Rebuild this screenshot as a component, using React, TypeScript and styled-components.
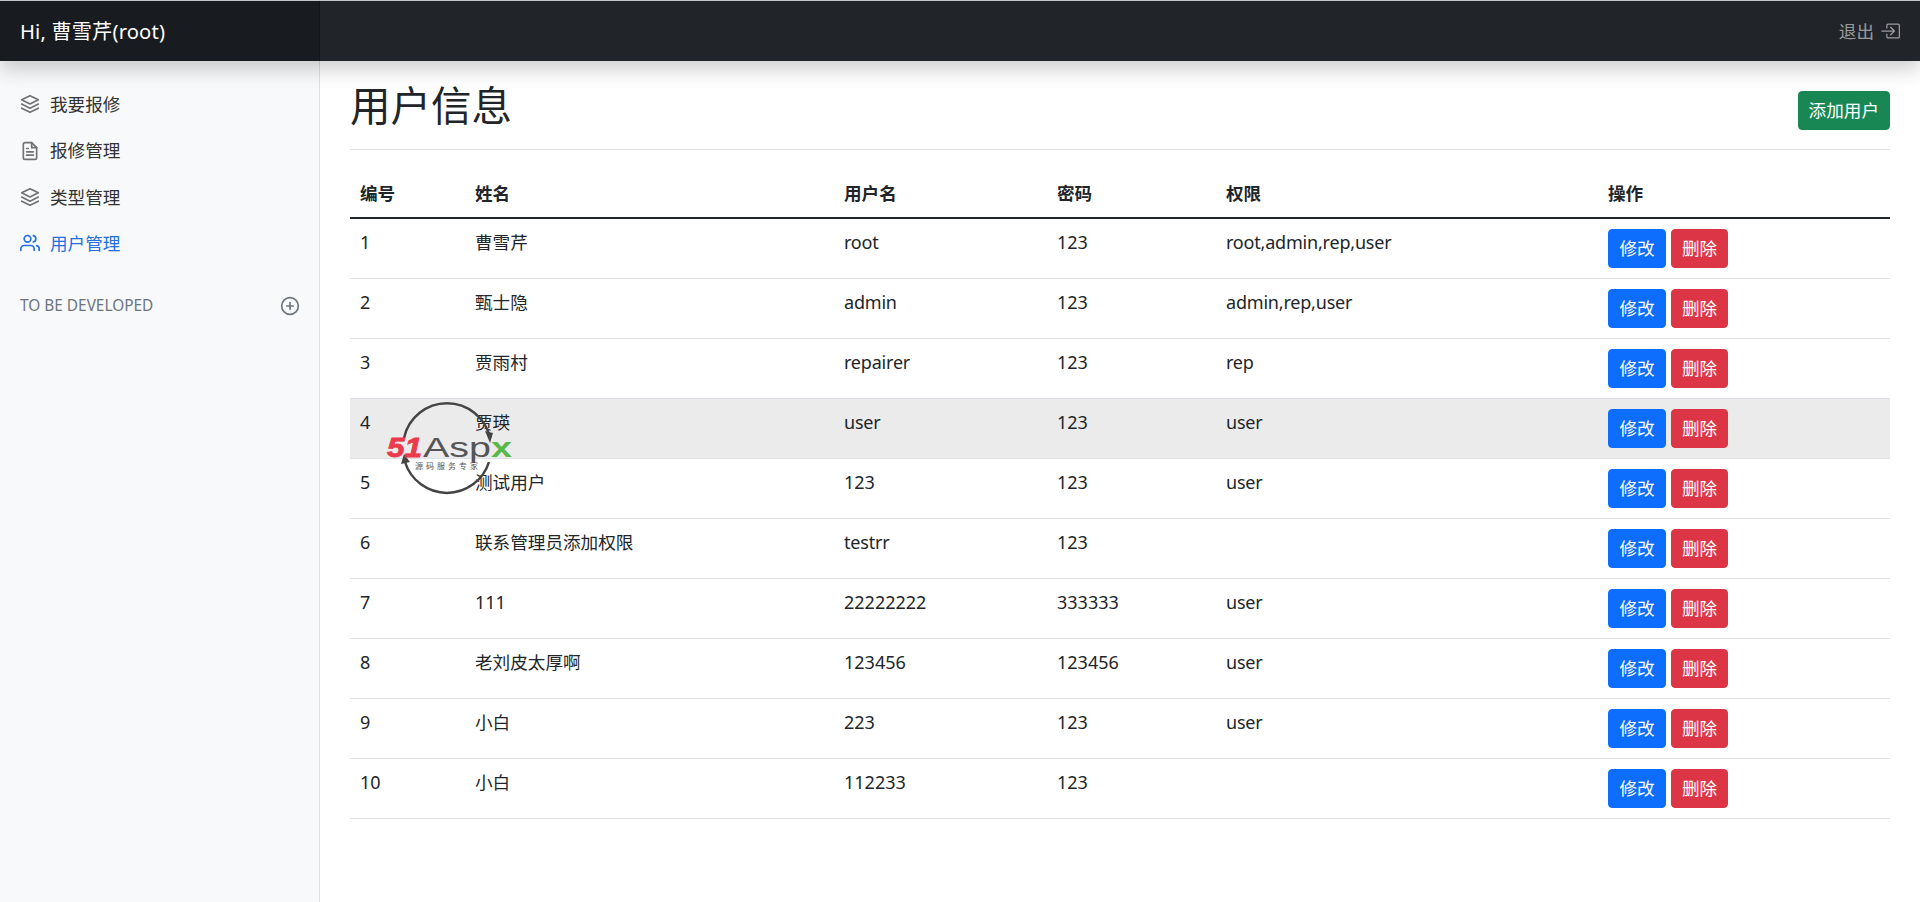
import React from "react";
import styled, { createGlobalStyle } from "styled-components";
import { FiLayers, FiFileText, FiUsers, FiPlusCircle } from "react-icons/fi";
import { BsBoxArrowInRight } from "react-icons/bs";

const Global = createGlobalStyle`
  html, body { margin: 0; padding: 0; background: #fff; }
  body {
    font-family: "Noto Sans", "Noto Sans CJK SC", sans-serif;
    font-size: 17.6px;
    line-height: 1.5;
    color: #212529;
    overflow: hidden;
  }
  * { box-sizing: border-box; }
`;

const Page = styled.div`
  position: relative;
  height: 902px;
  display: flex;
  flex-direction: column;
`;

const TopBar = styled.header`
  position: relative;
  z-index: 2;
  height: 61px;
  flex: none;
  display: flex;
  align-items: stretch;
  border-top: 1px solid #c4c5c6;
  background: #212529;
  box-shadow: 0 8px 20px rgba(0, 0, 0, 0.2);
`;

const Brand = styled.div`
  width: 320px;
  padding-left: 20px;
  display: flex;
  align-items: center;
  background: #181b1f;
  box-shadow: inset -1px 0 0 rgba(0, 0, 0, 0.25);
  color: #fff;
  font-size: 20.2px;
  letter-spacing: 0.15px;
`;

const SignOut = styled.a`
  margin-left: auto;
  padding-right: 20px;
  display: flex;
  align-items: center;
  gap: 6px;
  color: rgba(255, 255, 255, 0.55);
`;

const Body = styled.div`
  flex: 1;
  display: flex;
  min-height: 0;
`;

const Sidebar = styled.aside`
  width: 320px;
  flex: none;
  padding-top: 20px;
  background: #f8f9fa;
  box-shadow: inset -1px 0 0 rgba(0, 0, 0, 0.1);
`;

const NavList = styled.ul`
  list-style: none;
  margin: 0;
  padding: 0;
`;

const NavLink = styled.a<{ $active?: boolean }>`
  display: flex;
  align-items: center;
  gap: 10px;
  height: 46.4px;
  padding: 0 20px;
  color: ${(p) => (p.$active ? "#2470dc" : "#333")};
  svg {
    flex: none;
    color: ${(p) => (p.$active ? "#2470dc" : "#727272")};
  }
`;

const SectionHeading = styled.h6`
  margin: 27px 0 0;
  padding: 0 20px;
  height: 24px;
  display: flex;
  align-items: center;
  justify-content: space-between;
  color: #6c757d;
  font-size: 15.4px;
  font-weight: 400;
  text-transform: uppercase;
`;

const Main = styled.main`
  flex: 1;
  min-width: 0;
  padding: 0 30px;
`;

const TitleRow = styled.div`
  height: 89px;
  padding-top: 30px;
  display: flex;
  justify-content: space-between;
  align-items: flex-start;
  border-bottom: 1px solid #dee2e6;
`;

const Title = styled.h1`
  margin: -9px 0 0;
  font-size: 40.5px;
  font-weight: 400;
  line-height: 1.2;
  color: #212529;
`;

const Btn = styled.button<{ $bg: string; $w?: number }>`
  height: 39px;
  width: ${(p) => (p.$w ? `${p.$w}px` : "auto")};
  padding: ${(p) => (p.$w ? "0" : "0 10px")};
  border: 1px solid ${(p) => p.$bg};
  border-radius: 4px;
  background: ${(p) => p.$bg};
  color: #fff;
  font: inherit;
  line-height: 1;
  white-space: nowrap;
`;

const UserTable = styled.table`
  width: 100%;
  margin-top: 20px;
  border-collapse: collapse;
  table-layout: fixed;
`;

const Th = styled.th<{ $w: number }>`
  width: ${(p) => p.$w}px;
  height: 48px;
  padding: 10px;
  border-bottom: 2px solid #212529;
  font-weight: 700;
  text-align: left;
  vertical-align: top;
`;

const Row = styled.tr<{ $hover?: boolean }>`
  background: ${(p) => (p.$hover ? "#ebebeb" : "transparent")};
`;

const Td = styled.td<{ $latin?: boolean }>`
  height: 60px;
  padding: 10px;
  border-bottom: 1px solid #dee2e6;
  vertical-align: top;
  font-size: ${(p) => (p.$latin ? "18px" : "17.6px")};
  line-height: 27px;
  letter-spacing: ${(p) => (p.$latin ? "-0.2px" : "0")};
`;

const NumberSpan = styled.span`
  letter-spacing: 0;
  font-size: 18px;
`;

const Actions = styled.div`
  display: flex;
  gap: 5px;
`;

const Watermark = styled.svg`
  position: absolute;
  left: 385px;
  top: 400px;
  z-index: 1;
  pointer-events: none;
`;

const columns: [string, number][] = [
  ["编号", 115],
  ["姓名", 369],
  ["用户名", 213],
  ["密码", 169],
  ["权限", 382],
  ["操作", 292],
];

const users = [
  ["1", "曹雪芹", "root", "123", "root,admin,rep,user"],
  ["2", "甄士隐", "admin", "123", "admin,rep,user"],
  ["3", "贾雨村", "repairer", "123", "rep"],
  ["4", "贾瑛", "user", "123", "user"],
  ["5", "测试用户", "123", "123", "user"],
  ["6", "联系管理员添加权限", "testrr", "123", ""],
  ["7", "111", "22222222", "333333", "user"],
  ["8", "老刘皮太厚啊", "123456", "123456", "user"],
  ["9", "小白", "223", "123", "user"],
  ["10", "小白", "112233", "123", ""],
];

const nav = [
  { label: "我要报修", Icon: FiLayers },
  { label: "报修管理", Icon: FiFileText },
  { label: "类型管理", Icon: FiLayers },
  { label: "用户管理", Icon: FiUsers, active: true },
];

const isLatin = (v: string) => /^[\x00-\x7f]+$/.test(v);
const isNumber = (v: string) => /^\d+$/.test(v);

export default function App() {
  return (
    <Page>
      <Global />
      <TopBar>
        <Brand>Hi, 曹雪芹(root)</Brand>
        <SignOut>
          退出
          <BsBoxArrowInRight size={20} />
        </SignOut>
      </TopBar>
      <Body>
        <Sidebar>
          <NavList>
            {nav.map(({ label, Icon, active }) => (
              <li key={label}>
                <NavLink $active={active}>
                  <Icon size={20} />
                  {label}
                </NavLink>
              </li>
            ))}
          </NavList>
          <SectionHeading>
            To be developed
            <FiPlusCircle size={20} />
          </SectionHeading>
        </Sidebar>
        <Main>
          <TitleRow>
            <Title>用户信息</Title>
            <Btn $bg="#198754">添加用户</Btn>
          </TitleRow>
          <UserTable>
            <thead>
              <tr>
                {columns.map(([name, w]) => (
                  <Th key={name} $w={w}>
                    {name}
                  </Th>
                ))}
              </tr>
            </thead>
            <tbody>
              {users.map((u) => (
                <Row key={u[0]} $hover={u[0] === "4"}>
                  {u.map((v, i) => (
                    <Td key={i} $latin={isLatin(v)}>
                      {isNumber(v) ? <NumberSpan>{v}</NumberSpan> : v}
                    </Td>
                  ))}
                  <Td>
                    <Actions>
                      <Btn $bg="#0d6efd" $w={58}>修改</Btn>
                      <Btn $bg="#dc3545" $w={57}>删除</Btn>
                    </Actions>
                  </Td>
                </Row>
              ))}
            </tbody>
          </UserTable>
        </Main>
      </Body>
      <Watermark width="130" height="95" viewBox="0 0 130 95">
        <path d="M19 38 A44 44 0 0 1 105 38" fill="none" stroke="#444" strokeWidth="2.5" />
        <path d="M100 31 L108 33 L105 43 Z" fill="#444" />
        <path d="M20 62 A44 44 0 0 0 104 62" fill="none" stroke="#444" strokeWidth="2.5" />
        <path d="M16 64 L19 54 L25 62 Z" fill="#444" />
        <text x="2" y="57" fontFamily="Liberation Sans, sans-serif" fontSize="27" fontWeight="700" fontStyle="italic" fill="#ea3a4b" stroke="#ea3a4b" strokeWidth="0.8" textLength="35" lengthAdjust="spacingAndGlyphs">51</text>
        <text x="38" y="57" fontFamily="Liberation Sans, sans-serif" fontSize="27" fill="#555" textLength="68" lengthAdjust="spacingAndGlyphs">Asp</text>
        <text x="106" y="57" fontFamily="Liberation Sans, sans-serif" fontSize="27" fontWeight="700" fill="#58b94a" textLength="21" lengthAdjust="spacingAndGlyphs">x</text>
        <text x="30" y="69" fontFamily="Noto Sans CJK SC, sans-serif" fontSize="8" fill="#555" textLength="63">源码服务专家</text>
      </Watermark>
    </Page>
  );
}
